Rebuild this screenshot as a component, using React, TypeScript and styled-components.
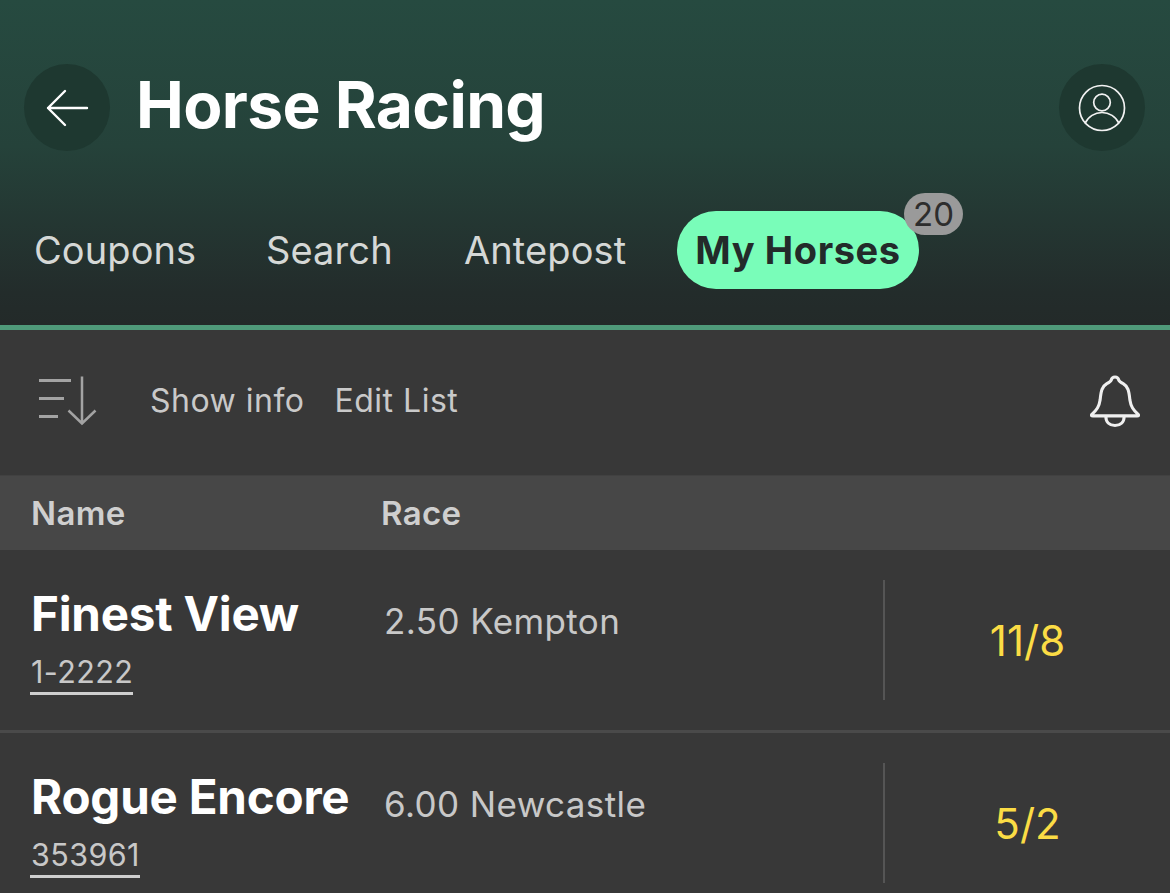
import React from "react";
import styled, { createGlobalStyle } from "styled-components";

const Global = createGlobalStyle`
  html, body { margin: 0; padding: 0; background: #383838; overflow: hidden; }
  body { font-family: Inter, "Liberation Sans", sans-serif; }
`;
const Page = styled.div`width: 1170px; height: 893px; overflow: hidden; background: #383838;`;
const Header = styled.header`
  height: 325px; box-sizing: border-box; padding: 64px 25px 0 24px;
  background: linear-gradient(180deg, #264a40 0%, #25423a 45%, #232c2b 90%, #232a29 100%);
`;
const Accent = styled.div`height: 5px; background: #4f9a7a;`;
const TitleRow = styled.div`display: flex; align-items: center; height: 87px;`;
const Round = styled.button`
  width: 86px; height: 87px; flex: none; border: 0; padding: 0; border-radius: 50%;
  background: #1e3830; display: flex; align-items: center; justify-content: center;
`;
const Title = styled.h1`
  flex: 1; margin: 0 0 0 26px; color: #fff; font-size: 64px; font-weight: 700;
  letter-spacing: -0.6px; line-height: 87px; position: relative; top: -3px;
`;
const Tabs = styled.nav`display: flex; align-items: center; margin-top: 60px; height: 78px;`;
const Tab = styled.div<{ $w: number }>`
  width: ${(p) => p.$w}px; flex: none; padding-left: 10px; box-sizing: border-box;
  color: #d5d8d6; font-size: 38px; line-height: 78px; letter-spacing: 0.1px;
`;
const ActiveTab = styled.div`
  position: relative; height: 78px; width: 242px; box-sizing: border-box; border-radius: 39px;
  background: #79fdb9; color: #232b2a; font-size: 38px; font-weight: 700; line-height: 78px;
  text-align: center; white-space: nowrap; letter-spacing: 0.6px;
`;
const Badge = styled.span`
  position: absolute; left: 227px; top: -18px; width: 59px; height: 42px; border-radius: 21px;
  background: #9a9a9a; color: #2d2d2d; font-size: 33px; font-weight: 400; line-height: 42px;
  text-align: center; letter-spacing: 0;
`;
const Toolbar = styled.div`
  height: 145px; box-sizing: border-box; display: flex; align-items: center; padding: 0 30px 4px 38px;
  color: #c9c9c9; font-size: 32px;
`;
const ToolLabel = styled.span<{ $ml: number }>`margin-left: ${(p) => p.$ml}px; letter-spacing: 0.5px;`;
const Spacer = styled.div`flex: 1;`;
const ColHead = styled.div`
  height: 75px; display: flex; align-items: center; background: #474747; color: #cfcfcf;
  border-top: 1px solid #414141; box-sizing: border-box; position: relative;
  font-size: 33px; font-weight: 600; padding-left: 31px; letter-spacing: 0.35px;
`;
const RaceHead = styled.span`position: absolute; left: 381px;`;
const Row = styled.div`
  height: 183px; box-sizing: border-box; display: flex; align-items: flex-start;
  border-bottom: 3px solid #4a4a4a; padding-top: 30px;
`;
const NameCol = styled.div`width: 384px; flex: none; box-sizing: border-box; padding-left: 30px;`;
const Name = styled.div`
  color: #fff; font-size: 47.5px; font-weight: 700; line-height: 56px; padding-left: 1px; margin-top: 6px;
  letter-spacing: -0.2px; white-space: nowrap;
`;
const Form = styled.span`
  display: inline-block; margin-top: 12px; padding: 0 0 2px 1px; color: #c8c8c8; font-size: 30.5px; line-height: 36px;
  border-bottom: 3px solid #cfcfcf; letter-spacing: 0.4px;
`;
const Race = styled.div`
  width: 499px; flex: none; color: #c8c8c8; font-size: 35px; line-height: 44px; margin-top: 19px; letter-spacing: 0.4px;
`;
const Odds = styled.div`
  width: 287px; height: 120px; box-sizing: border-box; border-left: 2px solid #555; flex: none;
  display: flex; align-items: center; justify-content: center; color: #fbdc45; font-size: 42px;
`;

const Back = () => (
  <svg width="46" height="40" viewBox="0 0 46 40" fill="none" stroke="#fff" strokeWidth="2.4" strokeLinecap="round" strokeLinejoin="round">
    <path d="M4 20h39M21 3 4 20l17 17" />
  </svg>
);
const User = () => (
  <svg width="48" height="48" viewBox="0 0 48 48" fill="none" stroke="#f2f2f2" strokeWidth="1.7">
    <circle cx="24" cy="24" r="22.5" />
    <circle cx="24" cy="18.500" r="8.300" />
    <path d="M7 39.500c3-7 10-11 17-11s14 4 17 11" />
  </svg>
);
const Sort = () => (
  <svg width="60" height="50" viewBox="0 0 60 50" fill="none" stroke="#a3a3a3" strokeWidth="3">
    <path d="M1 4.500h32M1 22.500h25M1 40.500h19" />
    <path strokeWidth="2.500" d="M44 .5v47M30.500 34.500 44 47.500l13.500-13" />
  </svg>
);
const Bell = () => (
  <svg width="50" height="54" viewBox="0 0 52 54" fill="none" stroke="#efefef" strokeWidth="3.2" strokeLinejoin="round">
    <path d="M2 41c5-5 7.500-8 8.500-15 1-10 2-14 7-17 2-1 4-2 4.500-3.500C22.500 3 24 2 26 2s3.500 1 4 3.500C30.500 7 32.500 8 34.500 9c5 3 6 7 7 17 1 7 3.500 10 8.500 15 1 1 .5 1.500-1 1.500H3c-1.500 0-2-.5-1-1.500Z" />
    <path d="M16.500 43c0 6 4 9.500 9.500 9.500S35.500 49 35.500 43" />
  </svg>
);

const rows = [
  { name: "Finest View", form: "1-2222", race: "2.50 Kempton", odds: "11/8" },
  { name: "Rogue Encore", form: "353961", race: "6.00 Newcastle", odds: "5/2" },
];

export default function App() {
  return (
    <Page>
      <Global />
      <Header>
        <TitleRow>
          <Round><Back /></Round>
          <Title>Horse Racing</Title>
          <Round><User /></Round>
        </TitleRow>
        <Tabs>
          <Tab $w={232}>Coupons</Tab>
          <Tab $w={198}>Search</Tab>
          <Tab $w={223}>Antepost</Tab>
          <ActiveTab>My Horses<Badge>20</Badge></ActiveTab>
        </Tabs>
      </Header>
      <Accent />
      <Toolbar>
        <Sort />
        <ToolLabel $ml={52}>Show info</ToolLabel>
        <ToolLabel $ml={30}>Edit List</ToolLabel>
        <Spacer />
        <Bell />
      </Toolbar>
      <ColHead>Name<RaceHead>Race</RaceHead></ColHead>
      {rows.map((r) => (
        <Row key={r.name}>
          <NameCol>
            <Name>{r.name}</Name>
            <Form>{r.form}</Form>
          </NameCol>
          <Race>{r.race}</Race>
          <Odds>{r.odds}</Odds>
        </Row>
      ))}
    </Page>
  );
}
